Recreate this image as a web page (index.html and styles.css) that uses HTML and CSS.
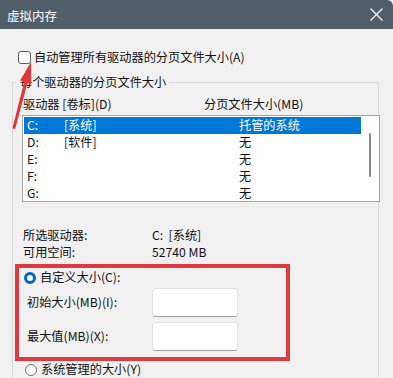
FILE: index.html
```html
<!DOCTYPE html>
<html lang="zh-CN">
<head>
    <meta charset="UTF-8">
    <meta name="viewport" content="width=device-width, initial-scale=1.0">
    <title>虚拟内存</title>
    <link rel="stylesheet" href="styles.css">
</head>
<body>

    <div class="titlebar">
        <span class="title">虚拟内存</span>
        <svg class="close" width="13" height="13" viewBox="0 0 13 13">
            <path d="M0.5 0.5 L12.5 12.5 M12.5 0.5 L0.5 12.5" stroke="#fff" stroke-width="1.1" fill="none"/>
        </svg>
    </div>

    <div class="auto-row">
        <span class="checkbox"></span>
        <span>自动管理所有驱动器的分页文件大小(A)</span>
    </div>

    <fieldset class="group">
        <legend>每个驱动器的分页文件大小</legend>

        <div class="cols">
            <span class="col-drive">驱动器 [卷标](D)</span>
            <span>分页文件大小(MB)</span>
        </div>

        <div class="listbox">
            <div class="rows">
                <div class="row selected"><span class="c1">C:</span><span class="c2">[系统]</span><span>托管的系统</span></div>
                <div class="row"><span class="c1">D:</span><span class="c2">[软件]</span><span>无</span></div>
                <div class="row"><span class="c1">E:</span><span class="c2"></span><span>无</span></div>
                <div class="row"><span class="c1">F:</span><span class="c2"></span><span>无</span></div>
                <div class="row"><span class="c1">G:</span><span class="c2"></span><span>无</span></div>
            </div>
            <div class="scroll"><div class="thumb"></div></div>
        </div>

        <div class="info">
            <div class="info-row"><span class="info-label">所选驱动器:</span><span>C:&nbsp;&nbsp;[系统]</span></div>
            <div class="info-row"><span class="info-label">可用空间:</span><span>52740 MB</span></div>
        </div>

        <div class="highlight">
            <div class="radio-row">
                <span class="radio checked"></span>
                <span>自定义大小(C):</span>
            </div>
            <div class="field-row">
                <span class="field-label">初始大小(MB)(I):</span>
                <span class="input"></span>
            </div>
            <div class="field-row">
                <span class="field-label">最大值(MB)(X):</span>
                <span class="input"></span>
            </div>
        </div>

        <div class="radio-row plain">
            <span class="radio"></span>
            <span>系统管理的大小(Y)</span>
        </div>
    </fieldset>

    <!-- annotation arrow pointing at the checkbox -->
    <svg class="arrow" width="40" height="140" viewBox="0 0 40 140">
        <polygon points="31,62 31.2,84.5 27.4,83 15.2,129 12.4,128.2 24.2,82 20.2,80.6" fill="#e0383a"/>
    </svg>

</body>
</html>
```

FILE: styles.css
```css
body {
    margin: 0;
    width: 393px;
    height: 378px;
    overflow: hidden;
    position: relative;
    background-color: #f0f0f0;
    color: #111;
    font-family: "Noto Sans CJK SC", "Noto Sans", sans-serif;
    font-size: 12.2px;
    line-height: 17px;
}

.titlebar {
    height: 29px;
    background-color: #4f5e69;
    color: #fff;
    display: flex;
    align-items: center;
    justify-content: space-between;
    padding: 0 10px 0 7px;
    border-top-right-radius: 6px;
}

.title {
    font-size: 12.5px;
    padding-top: 1px;
}

.auto-row {
    display: flex;
    align-items: center;
    gap: 3px;
    height: 13px;
    margin: 22px 0 0 18px;
}

.checkbox {
    width: 11px;
    height: 11px;
    border: 1px solid #5a5a5a;
    border-radius: 3px;
    background-color: #fff;
}

.group {
    margin: 10px 14px 0 12px;
    padding: 0 0 40px 0;
    border: 1px solid #d9d9d9;
    border-bottom: none;
    min-width: 0;
}

.group legend {
    margin-left: 4px;
    padding: 0 3px;
    line-height: 17px;
}

.cols {
    display: flex;
    padding-left: 10px;
    margin-top: 5px;
}

.col-drive {
    width: 181px;
}

.listbox {
    display: flex;
    height: 85px;
    margin: 2px -2px 0 9px;
    border: 1px solid #a3a3a3;
    background-color: #fff;
    overflow: hidden;
}

.rows {
    flex: 1;
    padding: 1px 0 0 1px;
}

.row {
    display: flex;
    height: 17px;
    padding-left: 3px;
}

.row.selected {
    background-color: #0078d7;
    color: #fff;
}

.c1 {
    width: 37px;
}

.c2 {
    width: 175px;
}

.scroll {
    width: 18px;
    display: flex;
    justify-content: center;
}

.thumb {
    width: 2px;
    height: 44px;
    margin-top: 17px;
    background-color: #8a8a8a;
    border-radius: 1px;
}

.info {
    margin-top: 25px;
    padding-left: 10px;
}

.info-row {
    display: flex;
}

.info-label {
    width: 129px;
}

.highlight {
    margin: 3px 0 0 2px;
    width: 267px;
    border: 4px solid #dc3a40;
    padding: 1px 0 6px 0;
}

.radio-row {
    display: flex;
    align-items: center;
    gap: 4px;
    height: 17px;
    padding-left: 5px;
}

.radio-row.plain {
    padding-left: 12px;
}

.radio {
    box-sizing: border-box;
    width: 12px;
    height: 12px;
    border-radius: 50%;
    border: 1px solid #6e6e6e;
    background-color: #fff;
}

.radio.checked {
    border: 3px solid #0067c0;
}

.field-row {
    display: flex;
    align-items: center;
    padding-left: 8px;
    margin-top: 2px;
}

.field-row + .field-row {
    margin-top: 5px;
}

.field-label {
    width: 125px;
}

.input {
    box-sizing: border-box;
    width: 86px;
    height: 29px;
    background-color: #fff;
    border: 1px solid #e2e2e2;
    border-bottom-color: #a0a0a0;
    border-radius: 3px;
}

.arrow {
    position: absolute;
    left: 0;
    top: 0;
}
```
